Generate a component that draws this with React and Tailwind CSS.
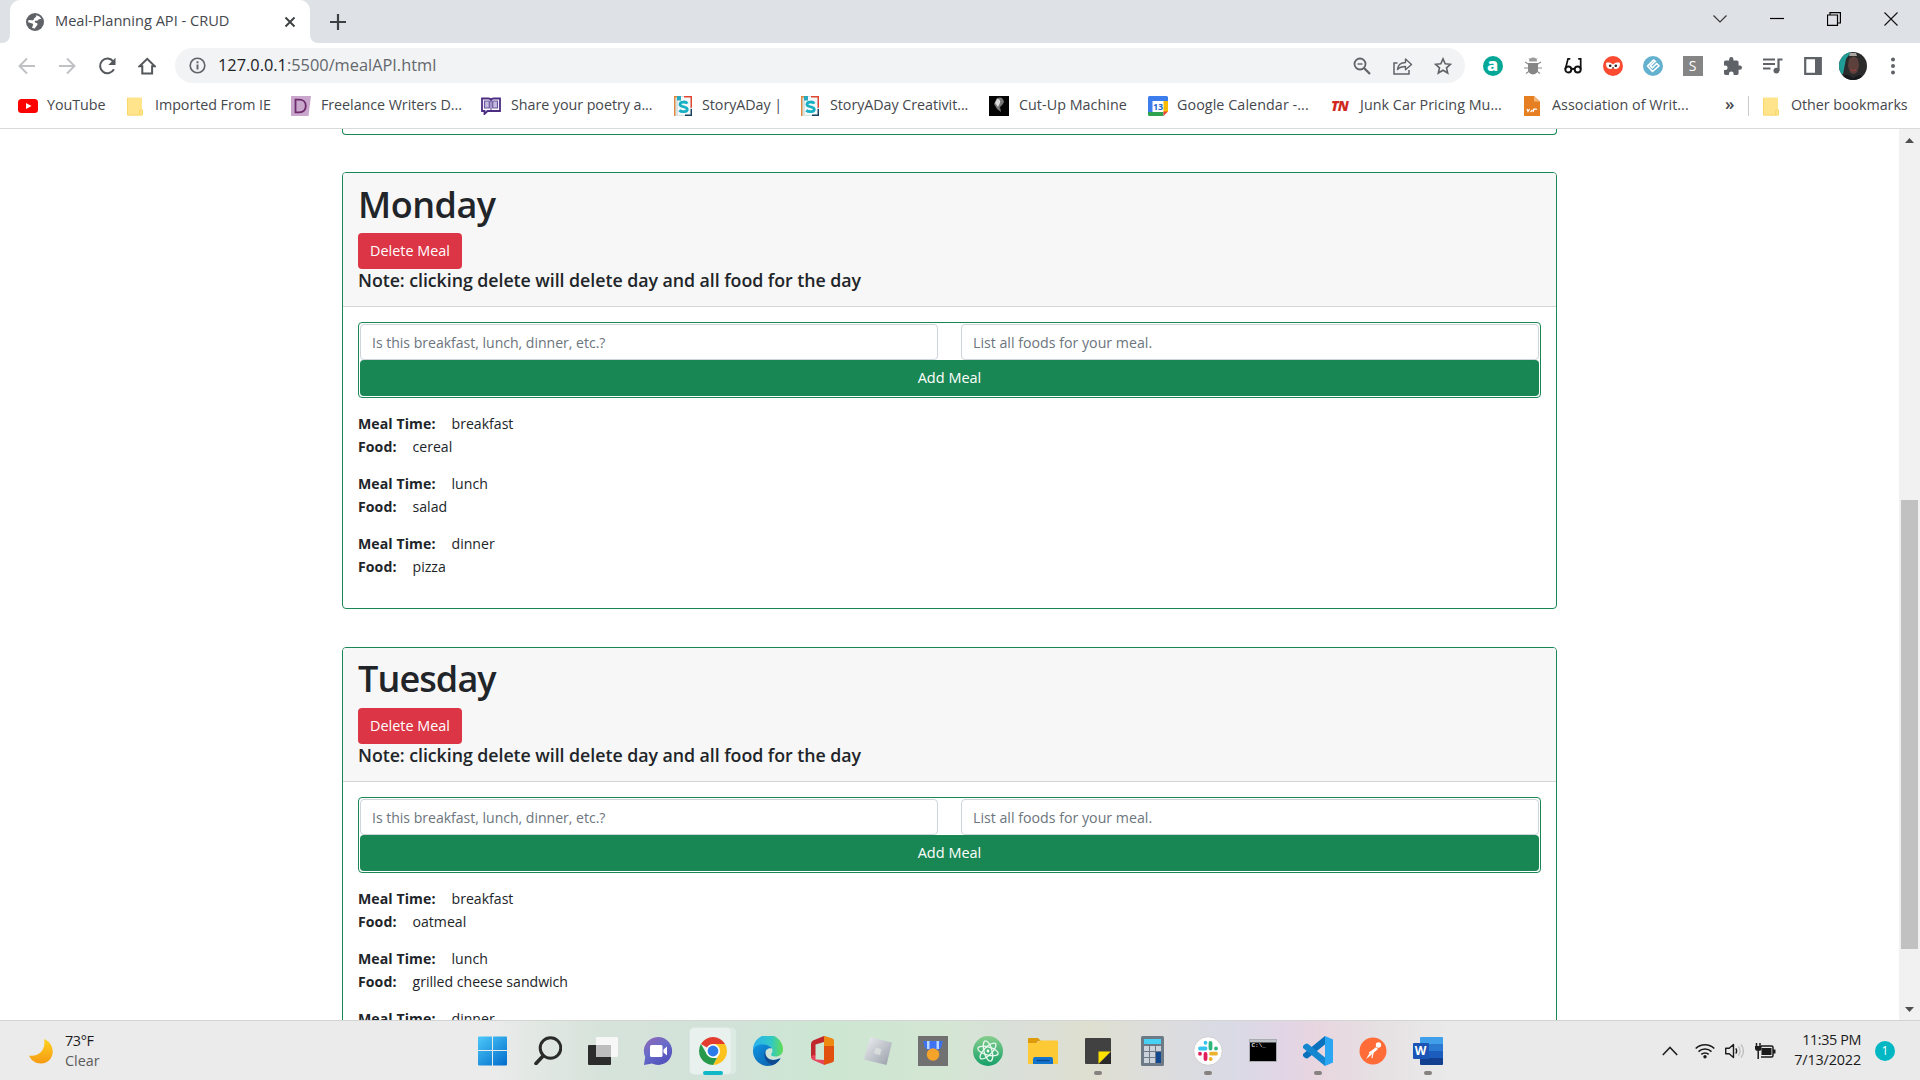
import React from "react";

function Svg({ w, h, vb, className = "", children }) {
  return (
    <svg width={w} height={h} viewBox={vb || `0 0 ${w} ${h}`} className={`block shrink-0 ${className}`} fill="none">
      {children}
    </svg>
  );
}

/* ---------- tab strip ---------- */
function TabStrip() {
  return (
    <div className="flex h-[43px] bg-[#dee1e6]">
      <div className="flex w-[10px] items-end bg-white">
        <div className="h-full w-full rounded-br-[8px] bg-[#dee1e6]" />
      </div>
      <div className="flex bg-[#dee1e6]">
        <div className="flex h-[43px] w-[300px] items-center rounded-t-[10px] bg-white pl-[16px] pr-[14px]">
          <Svg w={18} h={18} vb="0 0 18 18">
            <circle cx="9" cy="9" r="9" fill="#5f6368" />
            <path d="M2.300 7.500C4 6.300 5.500 7.600 7 7.200c1.400-.4.500-1.900 1.900-2.500 1-.4 1.500-1.200 1.200-2.400 2.400.3 4.500 1.900 5.300 4.100-1.500-.6-2.600-.3-3.200.7-.7 1.100-2.600 0-3.300 1-.6.900.5 1.800 1.700 1.900 1.600.2 1 2 .1 2.800-.8.700-1.200 1.700-1.900 2.800-1-.1-2-.4-2.800-.9.700-1.100.5-1.900 1-2.800.4-.900-.4-1.500-1.300-1.600-1.200-.1-2.200-.8-3.400-.8-.2-.7-.2-1.400 0-2z" fill="#fff" />
          </Svg>
          <span className="ml-[11px] flex-1 pb-[2px] whitespace-nowrap text-[14.600px] text-[#45484d]">Meal-Planning API - CRUD</span>
          <Svg w={12} h={12}><path d="M1.500 1.500l9 9M10.500 1.500l-9 9" stroke="#3c4043" strokeWidth="1.900" /></Svg>
        </div>
      </div>
      <div className="w-[10px] bg-white">
        <div className="h-full w-full rounded-bl-[8px] bg-[#dee1e6]" />
      </div>
      <div className="flex flex-1 items-center pl-[10px]">
        <Svg w={16} h={16}><path d="M8 0v16M0 8h16" stroke="#3c4043" strokeWidth="2.200" /></Svg>
      </div>
      <div className="flex items-start pt-[12px] pr-[22px]">
        <Svg w={14} h={14} className="mr-[43px]"><path d="M.5 3.500l6.500 6.500 6.500-6.500" stroke="#333" strokeWidth="1.100" /></Svg>
        <Svg w={14} h={14} className="mr-[43px]"><path d="M0 6.500h14" stroke="#000" strokeWidth="1.200" /></Svg>
        <Svg w={14} h={14} className="mr-[43px]"><path d="M.5 3h10v10.400h-10zM3 3V.600h10.400V11H11" stroke="#000" strokeWidth="1.200" /></Svg>
        <Svg w={14} h={14}><path d="M.5.500l13 13M13.500.500l-13 13" stroke="#111" strokeWidth="1.100" /></Svg>
      </div>
    </div>
  );
}

/* ---------- toolbar ---------- */
function Slot({ children }) {
  return <div className="flex h-[40px] w-[40px] shrink-0 items-center justify-center">{children}</div>;
}

function Toolbar() {
  return (
    <div className="flex h-[45px] items-center bg-white pl-[7px]">
      <Slot><Svg w={18} h={18}><path d="M17 9H2M9 1.500L1.500 9 9 16.500" stroke="#bfc1c4" strokeWidth="1.900" /></Svg></Slot>
      <Slot><Svg w={18} h={18}><path d="M1 9h15M9 1.500L16.500 9 9 16.500" stroke="#bfc1c4" strokeWidth="1.900" /></Svg></Slot>
      <Slot><Svg w={18} h={18}><path d="M15.900 12.200A7.300 7.300 0 1 1 15.100 4.300" stroke="#54575c" strokeWidth="2" /><path d="M17.500 .800v7.200H10.300z" fill="#54575c" /></Svg></Slot>
      <Slot><Svg w={18} h={18}><path d="M1.600 9.200L9.200 1.800l7.600 7.400h-2.700v7.300H4.300V9.200z" stroke="#54575c" strokeWidth="2" /></Svg></Slot>
      <div className="ml-[8px] flex h-[35px] w-[1290px] items-center rounded-full bg-[#f1f3f4] pl-[14px] pr-[13px]">
        <Svg w={17} h={17}><circle cx="8.500" cy="8.500" r="7.300" stroke="#5f6368" strokeWidth="1.600" /><path d="M8.500 7.500v5M8.500 4.300v1.900" stroke="#5f6368" strokeWidth="1.900" /></Svg>
        <span className="ml-[12px] flex-1 whitespace-nowrap text-[16.350px] text-[#63676c]"><span className="text-[#202124]">127.0.0.1</span>:5500/mealAPI.html</span>
        <Svg w={18} h={18} className="mr-[22px] ml-[1px]"><circle cx="7" cy="7" r="5.500" stroke="#5f6368" strokeWidth="1.800" /><path d="M11 11l6 6" stroke="#5f6368" strokeWidth="2.200" /><path d="M4.500 7h5" stroke="#5f6368" strokeWidth="1.400" /></Svg>
        <Svg w={20} h={18} className="mr-[21px]"><path d="M4.500 6H1v11h15v-4" stroke="#5f6368" strokeWidth="1.500" /><path d="M4.500 12.500c.5-4.500 3.500-7 8-7V2l6 5.500-6 5.200V9.500c-3.500 0-6 .8-8 3z" stroke="#5f6368" strokeWidth="1.400" strokeLinejoin="round" /></Svg>
        <Svg w={18} h={18}><path d="M9 1.900l2.200 4.900 5.300.5-4 3.500 1.200 5.200L9 13.200 4.300 16l1.200-5.200-4-3.500 5.300-.5z" stroke="#5f6368" strokeWidth="1.600" /></Svg>
      </div>
      <div className="ml-[7.500px] flex">
        <Slot>
          <div className="flex h-[20px] w-[20px] items-center justify-center rounded-full bg-[#06a796] pb-[3px] text-[18px] leading-none font-extrabold text-white">a</div>
        </Slot>
        <Slot>
          <Svg w={20} h={20}>
            <path d="M2 6l4 2.500M18 6l-4 2.500M1 12h18M3 17.500l4-3M17 17.500l-4-3" stroke="#8b8b8b" strokeWidth="1.100" />
            <path d="M6 5.500a4 4 0 0 1 8 0z" fill="#9c9c9c" /><path d="M5 7h10v6.500a5 5 0 0 1-10 0z" fill="#868686" />
            <path d="M6 2.500L7.500 4M14 2.500L12.500 4" stroke="#8b8b8b" />
          </Svg>
        </Slot>
        <Slot>
          <Svg w={18} h={18}>
            <circle cx="4.300" cy="12.500" r="3" stroke="#111" strokeWidth="1.900" /><circle cx="13.700" cy="12.500" r="3" stroke="#111" strokeWidth="1.900" />
            <path d="M1.300 12.500L4 1.900h2.300M16.700 12.500V1.900h-2.500M7.300 12.500q1.700-1.500 3.400 0" stroke="#111" strokeWidth="1.700" />
          </Svg>
        </Slot>
        <Slot>
          <Svg w={20} h={20}>
            <circle cx="10" cy="10" r="10" fill="#fa4a30" />
            <path d="M3.200 6.800C5.400 6 8.300 6.400 10 8.500c1.700-2.100 4.600-2.500 6.800-1.700.6 3.900-1.400 6.200-3.900 6.200-1.200 0-2.200-.4-2.900-1.300-.7.900-1.700 1.300-2.900 1.300-2.500 0-4.500-2.300-3.900-6.200z" fill="#fff" />
            <circle cx="7.200" cy="9.800" r="1.300" fill="#222" /><circle cx="12.800" cy="9.800" r="1.300" fill="#222" /><path d="M9 11.200h2l-1 1.800z" fill="#222" />
          </Svg>
        </Slot>
        <Slot>
          <Svg w={20} h={20}>
            <circle cx="10" cy="10" r="10" fill="#63b1cf" />
            <path d="M13 5.800L10.500 4l-6 6 5 5.500 6.500-5.700-2.300-2.300-4.500 4.300-1.900-1.900 4.200-4" stroke="#fff" strokeWidth="1.600" strokeLinejoin="round" />
          </Svg>
        </Slot>
        <Slot>
          <div className="flex h-[20px] w-[20px] items-center justify-center bg-[#858585] text-[14px] leading-none text-white">S</div>
        </Slot>
        <Slot>
          <Svg w={18} h={18} vb="2 1 21 21"><path fill="#5f6368" d="M20.500 11H19V7c0-1.100-.9-2-2-2h-4V3.500a2.500 2.500 0 0 0-5 0V5H4c-1.100 0-2 .9-2 2v3.800h1.500a2.700 2.700 0 0 1 0 5.400H2V20c0 1.100.9 2 2 2h3.800v-1.500a2.700 2.700 0 0 1 5.400 0V22H17c1.100 0 2-.9 2-2v-4h1.500a2.500 2.500 0 0 0 0-5z" /></Svg>
        </Slot>
        <Slot>
          <Svg w={20} h={18}><path d="M0 2.500h12M0 7h12M0 11.500h7.500" stroke="#5f6368" strokeWidth="2" /><path d="M15.500 14V2.500h4" stroke="#5f6368" strokeWidth="2.200" /><circle cx="13.400" cy="13.600" r="2.900" fill="#5f6368" /></Svg>
        </Slot>
        <Slot>
          <Svg w={18} h={18}><path d="M1.200 1.200h15.600v15.600H1.200z" stroke="#5f6368" strokeWidth="2.200" /><path d="M11 1h6v16h-6z" fill="#5f6368" /></Svg>
        </Slot>
        <Slot>
          <Svg w={28} h={28} className="ml-[1px]">
            <clipPath id="av"><circle cx="14" cy="14" r="14" /></clipPath>
            <g clipPath="url(#av)">
              <path d="M0 0h28v28H0z" fill="#2c2b2b" /><path d="M0 0h12L7 7 4 22H0z" fill="#1f9d97" />
              <path d="M10 7q4.500-5 9 0l1 6q-1 9-5.500 9T9 13z" fill="#5c403b" /><path d="M11 1h6l1 3h-8z" fill="#a9a4a1" /><path d="M12 17.500q2.500 2 5 0" stroke="#a33d42" strokeWidth="1.200" />
              <path d="M0 28q4-6 9-5l5 3 6-3q4 1 6 5z" fill="#171a1c" />
            </g>
          </Svg>
        </Slot>
        <Slot><Svg w={4} h={18}><circle cx="2" cy="2.500" r="2" fill="#5f6368" /><circle cx="2" cy="9" r="2" fill="#5f6368" /><circle cx="2" cy="15.500" r="2" fill="#5f6368" /></Svg></Slot>
      </div>
    </div>
  );
}

/* ---------- bookmarks ---------- */
function Folder() {
  return (
    <Svg w={16} h={19}>
      <path d="M0 1.500Q0 .500 1 .500h13q1 0 1 1V12l1 1v4q0 1.500-1.500 1.500H1q-1 0-1-1z" fill="#ffe48c" />
      <path d="M.500 1v16.500q0 .500.500.500h13.500q1 0 1-1v-3.500l-1-1q-2 0-2 2.500v2.500" stroke="#f7d66a" />
    </Svg>
  );
}
function Story() {
  return (
    <Svg w={18} h={20}>
      <path d="M0 0h18v20H0z" fill="#d8e2e3" /><path d="M4 1h12v18H4z" fill="#f4f8f8" />
      <path d="M.700 20V.700h6" stroke="#e0873c" strokeWidth="1.400" /><path d="M10 .700h7.300v11" stroke="#e2452f" strokeWidth="1.400" /><path d="M17.300 13v6.300H11" stroke="#16425f" strokeWidth="1.400" />
      <path d="M3 0h4v4.500H3z" fill="#28a9bd" />
      <path d="M13.300 7.600C12 5.300 6 5.500 6 8.400c0 3 7.300 1.700 7.300 4.900 0 3-6 3-8 .9" stroke="#17afc3" strokeWidth="2.800" />
    </Svg>
  );
}
function Mark({ w, icon, gap, children }) {
  return (
    <div className={`flex shrink-0 items-center whitespace-nowrap ${w}`}>
      {icon}
      <span className={`pb-[2px] ${gap}`}>{children}</span>
    </div>
  );
}
function Bookmarks() {
  return (
    <div className="flex h-[41px] items-center border-b border-[#d9dadc] bg-white pb-[4px] pl-[18px] text-[14.300px] tracking-[-0.050px] text-[#45484d]">
      <Mark w="w-[109px]" gap="ml-[9px]" icon={<Svg w={20} h={14}><rect width="20" height="14" rx="3.500" fill="#f00" /><path d="M8 4l5.500 3L8 10z" fill="#fff" /></Svg>}>YouTube</Mark>
      <Mark w="w-[164px]" gap="ml-[12px]" icon={<Folder />}>Imported From IE</Mark>
      <Mark w="w-[190px]" gap="ml-[10px]" icon={<Svg w={20} h={20}><path d="M0 0h20l-2.500 20H0z" fill="#c9a6cb" /><path d="M4.500 3.700v12.600h3.800c4 0 6.500-2.300 6.500-6.300s-2.500-6.300-6.500-6.300z" stroke="#6d2a6d" strokeWidth="1.800" /></Svg>}>Freelance Writers D...</Mark>
      <Mark w="w-[193px]" gap="ml-[10px]" icon={<Svg w={20} h={18}><path d="M1 1.500h6.500Q9.500 1.500 10 3q.500-1.500 2.500-1.500H19V14H6.500L3.500 17v-3H1z" stroke="#4b2e83" strokeWidth="1.800" /><path d="M10 3v10M3.500 4h4.800v7H3.500zM11.700 4h4.800v7h-4.800z" stroke="#6b54a0" strokeWidth="1.200" fill="#c4bbdf" /></Svg>}>Share your poetry a...</Mark>
      <Mark w="w-[127px]" gap="ml-[10px]" icon={<Story />}>StoryADay |</Mark>
      <Mark w="w-[188px]" gap="ml-[11px]" icon={<Story />}>StoryADay Creativit...</Mark>
      <Mark w="w-[159px]" gap="ml-[10px] tracking-[0.050px]" icon={<Svg w={20} h={20}><path d="M0 0h20v20H0z" fill="#050505" /><path d="M8 2q6-2 7 4-2 4-4 5l1 5-4-3-3-5z" fill="#777" /><path d="M8 3q4 0 3 4l-2 4-3-4z" fill="#ddd" /></Svg>}>Cut-Up Machine</Mark>
      <Mark w="w-[183px]" gap="ml-[9px] tracking-[0.080px]" icon={
        <span className="relative block h-[20px] w-[20px]">
          <Svg w={20} h={20}><rect width="20" height="20" rx="1.500" fill="#fff" /><path d="M0 1.500Q0 0 1.500 0h17Q20 0 20 1.500V5H4.500v11H0z" fill="#3b7ded" /><path d="M15.500 5H20v11h-4.500z" fill="#fbbc04" /><path d="M0 16h15.500v4h-14Q0 20 0 18.500z" fill="#30a350" /><path d="M15.500 15.500H20L15.500 20z" fill="#ea4335" /></Svg>
          <span className="absolute inset-0 flex items-center justify-center text-[9px] leading-none font-bold text-[#1a67d2]">13</span>
        </span>
      }>Google Calendar -...</Mark>
      <Mark w="w-[193px]" gap="ml-[11px] tracking-[0.050px]" icon={<span className="w-[18px] text-[14px] leading-none font-extrabold tracking-[-1px] text-[#d02a1e] italic">TN</span>}>Junk Car Pricing Mu...</Mark>
      <Mark w="w-[201px]" gap="ml-[12px] tracking-[0.050px]" icon={<Svg w={16} h={20}><path d="M0 0h10l6 5.500V20H0z" fill="#e67e22" /><path d="M10 0l6 5.500h-6z" fill="#f5b579" /><path d="M3 13l1 2.500 1.500-2.500M6.500 16l2-2M9 16l1-3 3 .3" stroke="#fff" strokeWidth="1.200" /></Svg>}>Association of Writ...</Mark>
      <span className="w-[23px] pb-[4px] text-[17px] font-semibold">»</span>
      <div className="mr-[14px] h-[20px] w-px bg-[#c9cbce]" />
      <Mark w="" gap="ml-[12px]" icon={<Folder />}>Other bookmarks</Mark>
    </div>
  );
}

/* ---------- page ---------- */
function DayCard({ day, tracking, meals }) {
  return (
    <section className="mb-[37.500px] rounded-[4px] border border-[#198754] bg-white">
      <header className="rounded-t-[3px] border-b border-[#d5d5d5] bg-[#f7f7f7] px-[15px] py-[7.500px]">
        <h1 className={`mb-[6.500px] pt-[1px] text-[36px] leading-[45px] font-semibold ${tracking}`}>{day}</h1>
        <button className="block h-[35.700px] w-[104px] rounded-[4px] bg-[#dc3545] text-[14.400px] leading-none whitespace-nowrap text-white">Delete Meal</button>
        <h5 className="mb-[7.500px] text-[17.800px] leading-[22.500px] font-semibold tracking-[-0.050px]">Note: clicking delete will delete day and all food for the day</h5>
      </header>
      <div className="p-[15px]">
        <form className="mb-[15px] rounded-[4px] border border-[#198754] p-px">
          <div className="grid grid-cols-2 gap-[23px]">
            <input className="h-[36px] rounded-[4px] border border-[#ced4da] px-[11px] text-[14.100px] tracking-[-0.030px] placeholder-[#6c757d]" placeholder="Is this breakfast, lunch, dinner, etc.?" />
            <input className="h-[36px] rounded-[4px] border border-[#ced4da] px-[11px] text-[14.200px] placeholder-[#6c757d]" placeholder="List all foods for your meal." />
          </div>
          <button type="button" className="block h-[36px] w-full rounded-[4px] bg-[#198754] text-[14.500px] leading-none text-white">Add Meal</button>
        </form>
        {meals.map(([time, food]) => (
          <div key={time} className="mb-[15px] text-[14.100px] leading-[22.500px]">
            <div><b className="mr-[16px] font-bold tracking-[0.080px]">Meal Time:</b>{time}</div>
            {food && <div><b className="mr-[16px] font-bold tracking-[0.080px]">Food:</b>{food}</div>}
          </div>
        ))}
      </div>
    </section>
  );
}

function Page() {
  return (
    <div className="flex h-[891px] overflow-hidden bg-white text-[#212529]">
      <div className="flex-1 pl-[342px]">
        <div className="w-[1215px]">
          <div className="mb-[37.200px] h-[6px] rounded-b-[4px] border border-t-0 border-[#198754]" />
          <DayCard day="Monday" tracking="tracking-[-0.500px]" meals={[["breakfast", "cereal"], ["lunch", "salad"], ["dinner", "pizza"]]} />
          <DayCard day="Tuesday" tracking="tracking-[-0.900px]" meals={[["breakfast", "oatmeal"], ["lunch", "grilled cheese sandwich"], ["dinner", ""]]} />
        </div>
      </div>
      <div className="flex w-[21px] flex-col items-center bg-[#f1f1f1] pt-[9px] pb-[8px]">
        <Svg w={9} h={5}><path d="M0 5L4.500 0 9 5z" fill="#505050" /></Svg>
        <div className="mt-[357px] h-[449px] w-[17px] bg-[#c1c1c1]" />
        <div className="flex-1" />
        <Svg w={9} h={5}><path d="M0 0l4.500 5L9 0z" fill="#505050" /></Svg>
      </div>
    </div>
  );
}

/* ---------- taskbar ---------- */
function TaskIcon({ dot, children }) {
  return (
    <div className="relative flex h-[60px] w-[55px] shrink-0 items-center justify-center">
      {children}
      {dot && <div className="absolute bottom-[6px] left-[24px] h-[4px] w-[8px] rounded-full bg-[#85827f]" />}
    </div>
  );
}

function Taskbar() {
  return (
    <div className="flex h-[60px] items-center border-t border-[#d3d4d4] bg-[linear-gradient(90deg,#ebebeb_0px,#ebebeb_490px,#d6e3da_600px,#d2e2d9_720px,#cce6d2_830px,#d3e6d3_940px,#dadfd9_1020px,#dedfcf_1090px,#dddddc_1150px,#d9dae5_1230px,#e2d5e5_1285px,#e8d6df_1320px,#e6e1e3_1380px,#eaeaea_1450px)] text-[#1b1b1b]">
      <div className="flex w-[465px] items-center pl-[28px]">
        <Svg w={26} h={26}><defs><linearGradient id="mn" x2="0" y2="1"><stop stopColor="#ffd21f" /><stop offset="1" stopColor="#f59a13" /></linearGradient></defs><path d="M16 1C29 6 27 25 13 25.500 8 25.700 3 22.500 1 17.500 12 19 18 11 16 1z" fill="url(#mn)" /></Svg>
        <div className="ml-[11px] text-[14.400px] leading-[20px]"><div className="tracking-[-0.400px]">73°F</div><div className="text-[#5b5b5b]">Clear</div></div>
      </div>
      <div className="flex">
        <TaskIcon>
          <Svg w={30} h={30}><defs><linearGradient id="wn" gradientUnits="userSpaceOnUse" x1="0" y1="0" x2="24" y2="30"><stop stopColor="#4ccaf9" /><stop offset="1" stopColor="#0672cf" /></linearGradient></defs><path d="M0 1.500Q0 .500 1 .500h13v13.500H0zM15 .500h13q1 0 1 1V14H15zM0 15h14v14.500H1q-1 0-1-1zM15 15h14v13.500q0 1-1 1H15z" fill="url(#wn)" /></Svg>
        </TaskIcon>
        <TaskIcon>
          <Svg w={28} h={29}><circle cx="16.500" cy="12" r="10.300" stroke="#2b2b2b" strokeWidth="3" /><path d="M9 20l-7 7.500" stroke="#2b2b2b" strokeWidth="3.600" strokeLinecap="round" /></Svg>
        </TaskIcon>
        <TaskIcon>
          <Svg w={30} h={30}><rect x="0" y="9" width="23" height="20" rx="1" fill="#2c2c2c" /><rect x="8" y="1" width="22" height="20" rx="1" fill="#f7f7f7" /><path d="M8 9h15v12H8z" fill="#bdbdbd" /></Svg>
        </TaskIcon>
        <TaskIcon>
          <Svg w={30} h={30}><defs><linearGradient id="ch" x2=".6" y2="1"><stop stopColor="#9367b4" /><stop offset=".5" stopColor="#6a6cc9" /><stop offset="1" stopColor="#5252bd" /></linearGradient></defs><path d="M15 1a14 14 0 1 1-6 26.600L1 29l1.200-8A14 14 0 0 1 15 1z" fill="url(#ch)" /><rect x="7" y="9" width="12.500" height="12" rx="1.500" fill="#fff" /><path d="M20.500 13.500l3.500-3v9l-3.500-3z" fill="#fff" /></Svg>
        </TaskIcon>
        <div className="relative flex h-[60px] w-[55px] items-center justify-center">
          <div className="absolute top-[6px] left-[8px] h-[48px] w-[44px] rounded-[5px] border border-[#d3e2dc] bg-[#dcebe4]" />
          <div className="absolute top-[6px] left-[4px] h-[48px] w-[43px] rounded-[5px] border border-[#dbe7e2] bg-[#e8f1ed]" />
          <Svg w={28} h={28} vb="0 0 28 28" className="relative">
            <path d="M1.900 7A14 14 0 0 1 26.100 7L14 14z" fill="#e33b2e" />
            <path d="M26.100 7H14l6 10.500L14 28A14 14 0 0 0 26.100 7z" fill="#fcc31e" />
            <path d="M1.900 7L8 17.500 14 21h3.900L14 28A14 14 0 0 1 1.900 7z" fill="#26994b" />
            <circle cx="14" cy="14" r="7" fill="#fff" /><circle cx="14" cy="14" r="5.400" fill="#2b7bea" />
          </Svg>
          <div className="absolute bottom-[6px] left-[18px] h-[4px] w-[20px] rounded-full bg-[#10b7c4]" />
        </div>
        <TaskIcon>
          <Svg w={30} h={30}><defs><linearGradient id="e1" x1="0" x2="1"><stop stopColor="#2bb0ee" /><stop offset=".6" stopColor="#30c8c8" /><stop offset="1" stopColor="#61dc52" /></linearGradient><linearGradient id="e2" x2="1" y2="1"><stop stopColor="#0f95e2" /><stop offset="1" stopColor="#0c59a4" /></linearGradient></defs>
            <path d="M0 14A15 15 0 0 1 30 13.500c0 4.500-3.500 7-7.500 7-3 0-4.500-1-4.500-2 0-.8 1.500-1.500 1.500-4 0-3-3-5-6.500-5C6 9.500 1 11.500 0 14z" fill="url(#e1)" />
            <path d="M0 14c1-3.500 5-5.500 9.500-5.500 4 0 8 1.500 9.500 4-6-1-8 4-6 8 2.500 4.500 9 4 14.500 1.500Q23 30 15 30A15 15 0 0 1 0 14z" fill="url(#e2)" />
            <path d="M12.500 13.500c-3 5.500 0 13.500 7 15.500 3.500-1 6.500-4 8-6.500-6 2.500-11.500 2-14-2-1.500-2.500-1.500-5-1-7z" fill="#0f4b92" />
          </Svg>
        </TaskIcon>
        <TaskIcon>
          <Svg w={24} h={29}><path d="M13 0L2 4.500Q0 5.500 0 8v14l4.500-2.500V8.500L13 6z" fill="#c0272d" /><path d="M0 20l4.500-1.500v5l9 .5v5L2 24q-2-1-2-4z" fill="#e8455b" /><path d="M13 0l8 2.500q2 .7 2 2.500v19q0 2-2 2.500L13 29z" fill="#e2500f" /><path d="M13 0l8 2.500q2 .7 2 2.500v5H13z" fill="#ee8a12" /></Svg>
        </TaskIcon>
        <TaskIcon>
          <Svg w={30} h={30}><defs><linearGradient id="rb" x2="1" y2="1"><stop stopColor="#eef0f2" /><stop offset="1" stopColor="#979ca8" /></linearGradient></defs><path d="M7 1l22 5.500L23.500 29 1 23.500z" fill="url(#rb)" /><path d="M12.500 11.500l6 1.500-1.500 6-6-1.500z" fill="#d8dcda" /></Svg>
        </TaskIcon>
        <TaskIcon>
          <Svg w={30} h={30}><path d="M0 0h30v30H0z" fill="#717171" /><path d="M5 5h20l-2 7-5 3h-6l-5-3z" fill="#3d72f0" /><path d="M9 5h2.500v8H9zM18.500 5H21v8h-2.500z" fill="#b8d8ff" /><circle cx="15" cy="18.500" r="6.200" fill="#f6a32b" /></Svg>
        </TaskIcon>
        <TaskIcon>
          <Svg w={30} h={30}><defs><linearGradient id="at" x2="0" y2="1"><stop stopColor="#86ce8c" /><stop offset="1" stopColor="#14a069" /></linearGradient></defs><circle cx="15" cy="15" r="15" fill="url(#at)" /><g stroke="#e9f8ee" strokeWidth="1.300"><ellipse cx="15" cy="15" rx="4" ry="10.500" transform="rotate(-15 15 15)" /><ellipse cx="15" cy="15" rx="4" ry="10.500" transform="rotate(45 15 15)" /><ellipse cx="15" cy="15" rx="4" ry="10.500" transform="rotate(105 15 15)" /></g><circle cx="15" cy="15" r="1.400" fill="#fff" /></Svg>
        </TaskIcon>
        <TaskIcon>
          <Svg w={30} h={28}><path d="M0 2Q0 1 1 1h9l3 3h-3L8 7H0z" fill="#dd9a0a" /><path d="M0 6h9l3-2.500h17q1 0 1 1V26q0 1-1 1H1q-1 0-1-1z" fill="#fdc935" /><path d="M5 27v-5q0-2 2-2h16q2 0 2 2v5z" fill="#1274cd" /><path d="M8.500 23.500h13" stroke="#0a4a93" strokeWidth="1.500" /></Svg>
        </TaskIcon>
        <TaskIcon dot>
          <Svg w={26} h={26}><path d="M0 1q0-1 1-1h24q1 0 1 1v12.500L13.500 26H1q-1 0-1-1z" fill="#414141" /><path d="M13.500 13.500H26L13.500 26z" fill="#ffe100" /><path d="M26 13.500V26H13.500z" fill="#2a2a2a" /></Svg>
        </TaskIcon>
        <TaskIcon>
          <Svg w={23} h={30}><rect width="23" height="30" rx="1.500" fill="#6e7a86" /><path d="M3 3h17v5H3z" fill="#45d2f4" /><path d="M3 10h5v5H3zM9 10h5v5H9zM15 10h5v5h-5zM3 16h5v5H3zM9 16h5v5H9zM3 22h5v5H3zM9 22h5v5H9z" fill="#ccd3da" /><path d="M15 16h5v11h-5z" fill="#12498f" /></Svg>
        </TaskIcon>
        <TaskIcon dot>
          <Svg w={30} h={30}><circle cx="15" cy="15" r="14.300" fill="#fff" stroke="#cfcfcf" />
            <g strokeWidth="3.800" strokeLinecap="round"><path d="M7 12.500h5.500M12.500 6.700v.1" stroke="#36c5f0" /><path d="M17.500 7v5.500M23 12.500v.1" stroke="#2eb67d" /><path d="M18 17.700h5M17.700 23v.1" stroke="#ecb22e" /><path d="M12.500 18v5M7 17.700v.1" stroke="#e01e5a" /></g>
          </Svg>
        </TaskIcon>
        <TaskIcon>
          <div className="relative">
            <Svg w={28} h={24}><rect x=".5" y=".5" width="27" height="22" fill="#000" stroke="#a9adb2" /><path d="M1 1h26v2.500H1z" fill="#bfc3c7" /></Svg>
            <span className="absolute top-[4px] left-[3px] font-['Liberation_Mono'] text-[6px] leading-none font-bold text-[#ddd]">C:\_</span>
          </div>
        </TaskIcon>
        <TaskIcon dot>
          <Svg w={30} h={30}><path d="M22 0l8 3.500v23L22 30z" fill="#2aa6f2" /><path d="M22 0v8.500L4.500 22.500 2 22l-2-2v-2z" fill="#0a72bd" /><path d="M22 30v-8.500L4.500 7.500 2 8l-2 2v2z" fill="#1586d0" /></Svg>
        </TaskIcon>
        <TaskIcon>
          <Svg w={28} h={28}><circle cx="14" cy="14" r="13.500" fill="#ff6c37" /><circle cx="19.500" cy="8" r="2.700" fill="#fff" /><path d="M17 10l2 2-8 7-4 3 3-5z" fill="#fff" /><path d="M16 12l-6 4M14 16l-1 5" stroke="#fff" strokeWidth="1.200" /></Svg>
        </TaskIcon>
        <TaskIcon dot>
          <div className="relative h-[28px] w-[30px]">
            <Svg w={30} h={28}><path d="M7 1q0-1 1-1h21q1 0 1 1v6.500H7z" fill="#3f9fe9" /><path d="M7 7h23v7H7z" fill="#2a7ad2" /><path d="M7 14h23v7H7z" fill="#1b5cbd" /><path d="M7 21h23v6q0 1-1 1H8q-1 0-1-1z" fill="#123f90" /><rect x="0" y="6" width="16" height="16" rx="1" fill="#1a55b5" /></Svg>
            <span className="absolute top-[7px] left-[1px] w-[14px] text-center text-[12px] leading-[14px] font-bold text-white">W</span>
          </div>
        </TaskIcon>
      </div>
      <div className="ml-[207px] flex items-center">
        <Svg w={16} h={10}><path d="M.800 9L8 1.500 15.200 9" stroke="#222" strokeWidth="1.600" /></Svg>
        <Svg w={20} h={16} className="ml-[17px]"><path d="M.700 5.600a13 13 0 0 1 18.600 0M3.500 8.600a9.200 9.200 0 0 1 13 0M6.300 11.400a5.300 5.300 0 0 1 7.400 0" stroke="#1b1b1b" strokeWidth="1.500" /><circle cx="10" cy="13.800" r="1.700" fill="#1b1b1b" /></Svg>
        <Svg w={20} h={16} className="ml-[10px]"><path d="M.700 5.300h3.500L8.500 1.500v13L4.200 10.700H.700z" stroke="#1b1b1b" strokeWidth="1.400" strokeLinejoin="round" /><path d="M10.800 5.300q1.800 2.700 0 5.400" stroke="#1b1b1b" strokeWidth="1.300" /><path d="M13.400 3.400q3.400 4.600 0 9.200M16 1.400q5 6.600 0 13.200" stroke="#bcbcbc" strokeWidth="1.300" /></Svg>
        <Svg w={21} h={16} className="ml-[10px]"><path d="M6 3h10.500q1.500 0 1.500 1.500v8q0 1.500-1.500 1.500H6" stroke="#1b1b1b" strokeWidth="1.500" /><path d="M6.500 5h10v7h-10z" fill="#1b1b1b" /><path d="M18 6.500h2.500v4H18z" fill="#1b1b1b" /><path d="M1.500 0v3M5 0v3M3.200 8v8" stroke="#1b1b1b" strokeWidth="1.500" /><path d="M0 3h6.500v2.500q0 2.500-3.200 2.500T0 5.500z" fill="#1b1b1b" /></Svg>
        <div className="w-[85px] pb-[1px] text-right text-[14.400px] leading-[20px] tracking-[-0.150px] whitespace-nowrap"><div className="tracking-[-0.400px]">11:35 PM</div><div>7/13/2022</div></div>
        <div className="ml-[14px] flex h-[20px] w-[20px] items-center justify-center rounded-full bg-[#00b7c3] text-[12px] leading-none text-white">1</div>
      </div>
    </div>
  );
}

export default function App() {
  return (
    <div className="flex h-[1080px] w-[1920px] flex-col overflow-hidden font-['Open_Sans',sans-serif]">
      <TabStrip />
      <Toolbar />
      <Bookmarks />
      <Page />
      <Taskbar />
    </div>
  );
}
